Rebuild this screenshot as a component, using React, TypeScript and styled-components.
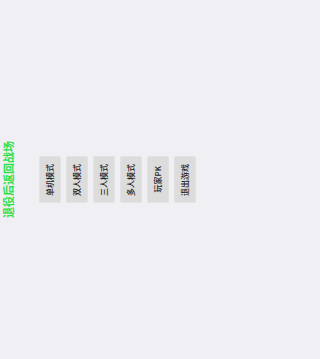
import React from "react";
import styled, { createGlobalStyle } from "styled-components";

const GlobalStyle = createGlobalStyle`
  html, body {
    margin: 0;
    padding: 0;
    background: #efeff4;
    font-family: "Noto Sans CJK SC", "Noto Sans", sans-serif;
  }
`;

const Page = styled.div`
  height: 100vh;
  display: flex;
  align-items: center;
  padding-left: 2px;
  box-sizing: border-box;
`;

const Title = styled.h1`
  margin: 0;
  writing-mode: vertical-rl;
  text-orientation: sideways;
  transform: rotate(180deg);
  font-size: 11px;
  line-height: 12px;
  font-weight: bold;
  color: #2fe04a;
  white-space: nowrap;
`;

const Menu = styled.div`
  display: flex;
  gap: 5px;
  margin-left: 25px;
`;

const MenuButton = styled.button`
  width: 22px;
  height: 47px;
  padding: 0;
  display: flex;
  align-items: center;
  justify-content: center;
  background: #dcdcdc;
  border: 1px solid #e2e2e2;
  border-radius: 2px;
  box-sizing: border-box;
  cursor: pointer;
  font-family: inherit;
`;

const Label = styled.span`
  writing-mode: vertical-rl;
  text-orientation: sideways;
  transform: rotate(180deg);
  font-size: 8px;
  line-height: 10px;
  font-weight: 500;
  color: #222;
  white-space: nowrap;
`;

const items = ["单机模式", "双人模式", "三人模式", "多人模式", "玩家PK", "退出游戏"];

const App: React.FC = () => {
  return (
    <>
      <GlobalStyle />
      <Page>
        <Title>退役后返回战场</Title>
        <Menu>
          {items.map((item) => (
            <MenuButton key={item}>
              <Label>{item}</Label>
            </MenuButton>
          ))}
        </Menu>
      </Page>
    </>
  );
};

export default App;
